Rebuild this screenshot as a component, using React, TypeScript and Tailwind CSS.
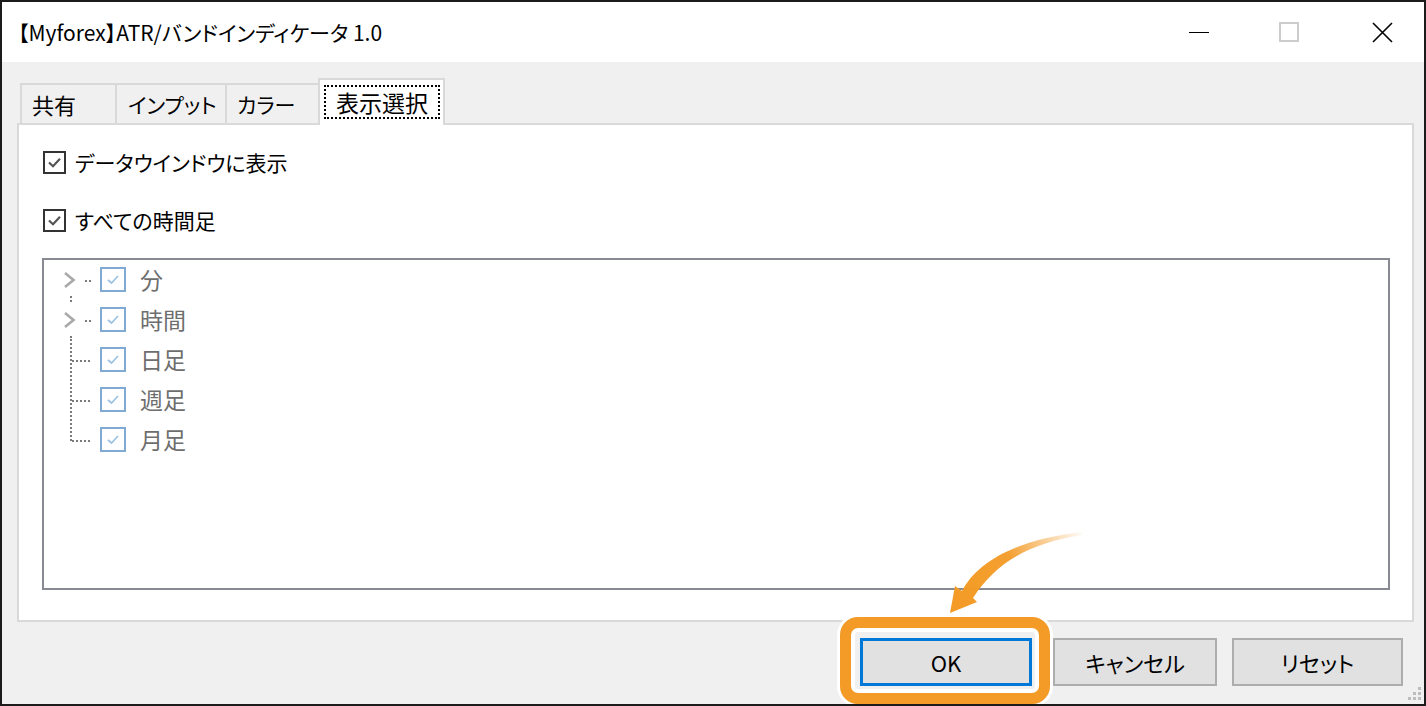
import React from "react";

const font =
  "font-['Noto_Sans_CJK_JP','Noto_Sans',sans-serif] [font-feature-settings:'palt']";

function MainCheck({ label }: { label: string }) {
  return (
    <div className="flex items-center h-[24px]">
      <div className="w-[23px] h-[23px] border-2 border-[#333333] bg-white flex items-center justify-center">
        <svg width="17" height="17" viewBox="0 0 17 17">
          <path d="M3 8.5 L7 12.2 L14 4.8" fill="none" stroke="#555555" strokeWidth="2.2" />
        </svg>
      </div>
      <span className="ml-[9px] text-[21px] leading-none text-black">{label}</span>
    </div>
  );
}

type Kind = "first" | "second" | "mid" | "last";

function Connector({ kind }: { kind: Kind }) {
  const dot = "#7a7a7a";
  return (
    <svg width="40" height="40" viewBox="0 0 40 40" className="shrink-0">
      {(kind === "first" || kind === "second") && (
        <>
          <path d="M5 14 L13.5 21 L5 28" fill="none" stroke="#a9a9a9" strokeWidth="2.6" />
          <rect x="25" y="21" width="2" height="2" fill={dot} />
          <rect x="29" y="21" width="2" height="2" fill={dot} />
        </>
      )}
      {kind === "first" && <rect x="10" y="37" width="2" height="2" fill={dot} />}
      {kind === "second" && (
        <>
          <rect x="10" y="1" width="2" height="2" fill={dot} />
          <line x1="11" y1="37" x2="11" y2="40" stroke={dot} strokeWidth="2" strokeDasharray="2 2" />
        </>
      )}
      {kind === "mid" && (
        <>
          <line x1="11" y1="0" x2="11" y2="40" stroke={dot} strokeWidth="2" strokeDasharray="2 2" />
          <line x1="12" y1="22" x2="32" y2="22" stroke={dot} strokeWidth="2" strokeDasharray="2 2" />
        </>
      )}
      {kind === "last" && (
        <>
          <line x1="11" y1="0" x2="11" y2="23" stroke={dot} strokeWidth="2" strokeDasharray="2 2" />
          <line x1="12" y1="22" x2="32" y2="22" stroke={dot} strokeWidth="2" strokeDasharray="2 2" />
        </>
      )}
    </svg>
  );
}

function TreeRow({ kind, label }: { kind: Kind; label: string }) {
  return (
    <div className="flex items-center h-[40px]">
      <Connector kind={kind} />
      <div className="w-[26px] h-[25px] border-2 border-[#7eaad4] bg-white flex items-center justify-center shrink-0">
        <svg width="18" height="17" viewBox="0 0 18 17">
          <path d="M4 9 L7.5 12 L14 5" fill="none" stroke="#9cc2e4" strokeWidth="1.7" />
        </svg>
      </div>
      <span className="ml-[14px] text-[23px] leading-none text-[#6e6e6e]">{label}</span>
    </div>
  );
}

function Button({ label, w, focused }: { label: string; w: string; focused?: boolean }) {
  return (
    <div
      className={
        "h-[48px] flex items-center justify-center bg-[#e1e1e1] text-[22px] leading-none text-black " +
        w +
        (focused ? " border-[3px] border-[#0078d7]" : " border-2 border-[#adadad]")
      }
    >
      {label}
    </div>
  );
}

export default function App() {
  return (
    <div className={"w-[1426px] h-[706px] bg-[#1b1b1b] p-[2px] " + font}>
      <div className="relative w-full h-full bg-[#f0f0f0] flex flex-col overflow-hidden">
        {/* Title bar */}
        <div className="h-[60px] bg-white flex items-center shrink-0">
          <div className="pl-[16px] text-[21px] leading-none text-black flex-1">
            【Myforex】ATR/バンドインディケータ 1.0
          </div>
          <div className="flex h-full">
            <div className="w-[90px] h-full flex items-center justify-center">
              <div className="w-[20px] h-[1px] bg-black" />
            </div>
            <div className="w-[90px] h-full flex items-center justify-center">
              <div className="w-[20px] h-[20px] border-2 border-[#cccccc]" />
            </div>
            <div className="w-[90px] h-full flex items-center justify-center pl-[6px]">
              <svg width="21" height="21" viewBox="0 0 21 21">
                <path d="M1 1 L20 20 M20 1 L1 20" stroke="#000" strokeWidth="1.6" />
              </svg>
            </div>
          </div>
        </div>

        {/* Body */}
        <div className="flex-1 flex flex-col pl-[15px] pr-[10px]">
          {/* Tabs */}
          <div className="mt-[16px] h-[45px] flex items-end pl-[3px] shrink-0 relative z-10">
            <div className="w-[97px] h-[40px] border-t-2 border-l-2 border-r-2 border-[#d9d9d9] bg-[#f0f0f0] flex items-center pl-[10px] text-[22px] leading-none text-black">
              共有
            </div>
            <div className="-ml-[2px] w-[112px] h-[40px] border-t-2 border-l-2 border-r-2 border-[#d9d9d9] bg-[#f0f0f0] flex items-center pl-[11px] text-[21px] leading-none text-black">
              インプット
            </div>
            <div className="-ml-[2px] w-[97px] h-[40px] border-t-2 border-l-2 border-r-2 border-[#d9d9d9] bg-[#f0f0f0] flex items-center pl-[10px] text-[21px] leading-none text-black">
              カラー
            </div>
            <div className="-ml-[4px] w-[127px] h-[47px] -mb-[2px] border-t-2 border-l-2 border-r-2 border-[#d9d9d9] bg-white pt-[5px] pl-[4px]">
              <div className="w-[116px] h-[34px] border-2 border-dotted border-black flex items-center justify-center text-[23px] leading-none text-black">
                表示選択
              </div>
            </div>
          </div>

          {/* Panel */}
          <div className="h-[499px] shrink-0 bg-white border-2 border-[#d9d9d9] flex flex-col pt-[25px] pl-[23px] pr-[22px] pb-[30px]">
            <div className="pl-[1px]">
              <MainCheck label="データウインドウに表示" />
            </div>
            <div className="pl-[1px] mt-[34px]">
              <MainCheck label="すべての時間足" />
            </div>
            <div className="mt-[26px] flex-1 border-2 border-[#878a90] bg-white pl-[16px] flex flex-col">
              <div className="-mt-[1px] flex flex-col">
                <TreeRow kind="first" label="分" />
                <TreeRow kind="second" label="時間" />
                <TreeRow kind="mid" label="日足" />
                <TreeRow kind="mid" label="週足" />
                <TreeRow kind="last" label="月足" />
              </div>
            </div>
          </div>

          {/* Buttons */}
          <div className="mt-[16px] flex justify-end pr-[11px]">
            <Button label="OK" w="w-[172px]" focused />
            <div className="w-[21px]" />
            <Button label="キャンセル" w="w-[164px]" />
            <div className="w-[15px]" />
            <Button label="リセット" w="w-[171px]" />
          </div>
        </div>

        {/* Resize grip */}
        <div className="absolute right-[2px] bottom-[3px] w-[14px] h-[14px]">
          <svg width="14" height="14" viewBox="0 0 14 14">
            <rect x="10" y="0" width="3" height="3" fill="#bdbdbd" />
            <rect x="5" y="5" width="3" height="3" fill="#bdbdbd" />
            <rect x="10" y="5" width="3" height="3" fill="#bdbdbd" />
            <rect x="0" y="10" width="3" height="3" fill="#bdbdbd" />
            <rect x="5" y="10" width="3" height="3" fill="#bdbdbd" />
            <rect x="10" y="10" width="3" height="3" fill="#bdbdbd" />
          </svg>
        </div>

        {/* Orange highlight around OK */}
        <div className="absolute left-[838px] top-[615px] w-[210px] h-[87px] rounded-[18px] border-[11px] border-[#f39b26] shadow-[0_0_0_3px_#ffffff,inset_0_0_0_4px_#ffffff] pointer-events-none" />

        {/* Orange arrow */}
        <svg
          className="absolute left-[918px] top-[518px] pointer-events-none"
          width="180"
          height="110"
          viewBox="0 0 180 110"
        >
          <defs>
            <linearGradient id="ag" x1="40" y1="80" x2="165" y2="12" gradientUnits="userSpaceOnUse">
              <stop offset="0" stopColor="#f39b26" stopOpacity="1" />
              <stop offset="0.45" stopColor="#f39b26" stopOpacity="0.95" />
              <stop offset="1" stopColor="#f39b26" stopOpacity="0" />
            </linearGradient>
          </defs>
          <path
            d="M30 93 L35 66 L42 71 C56 44 92 20 162 12 L162 15 C104 24 74 46 53 78 L57 82 Z"
            fill="url(#ag)"
          />
        </svg>
      </div>
    </div>
  );
}
